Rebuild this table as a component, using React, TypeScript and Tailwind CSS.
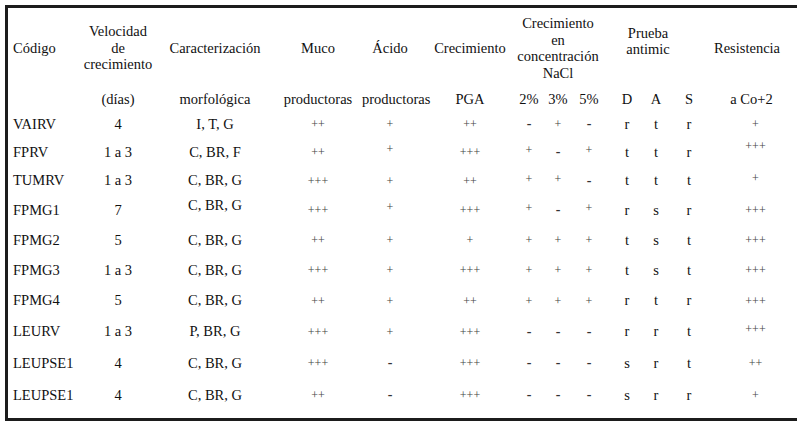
const cols =
  'grid grid-cols-[72px_76px_118px_88px_56px_96px_30px_28px_34px_42px_16px_50px_83px] items-center'

type Row = {
  code: string
  vel: string
  car: string
  muco: string
  acido: string
  pga: string
  nacl: [string, string, string]
  anti: [string, string, string]
  res: string
  h: string
}

const rows: Row[] = [
  { code: 'VAIRV', vel: '4', car: 'I, T, G', muco: '++', acido: '+', pga: '++', nacl: ['-', '+', '-'], anti: ['r', 't', 'r'], res: '+', h: 'h-[28px]' },
  { code: 'FPRV', vel: '1 a 3', car: 'C, BR, F', muco: '++', acido: '+', pga: '+++', nacl: ['+', '-', '+'], anti: ['t', 't', 'r'], res: '+++', h: 'h-[28px]' },
  { code: 'TUMRV', vel: '1 a 3', car: 'C, BR, G', muco: '+++', acido: '+', pga: '++', nacl: ['+', '+', '-'], anti: ['t', 't', 't'], res: '+', h: 'h-[29px]' },
  { code: 'FPMG1', vel: '7', car: 'C, BR, G', muco: '+++', acido: '+', pga: '+++', nacl: ['+', '-', '+'], anti: ['r', 's', 'r'], res: '+++', h: 'h-[30px]' },
  { code: 'FPMG2', vel: '5', car: 'C, BR, G', muco: '++', acido: '+', pga: '+', nacl: ['+', '+', '+'], anti: ['t', 's', 't'], res: '+++', h: 'h-[30px]' },
  { code: 'FPMG3', vel: '1 a 3', car: 'C, BR, G', muco: '+++', acido: '+', pga: '+++', nacl: ['+', '+', '+'], anti: ['t', 's', 't'], res: '+++', h: 'h-[30px]' },
  { code: 'FPMG4', vel: '5', car: 'C, BR, G', muco: '++', acido: '+', pga: '++', nacl: ['+', '+', '+'], anti: ['r', 't', 'r'], res: '+++', h: 'h-[31px]' },
  { code: 'LEURV', vel: '1 a 3', car: 'P, BR, G', muco: '+++', acido: '+', pga: '+++', nacl: ['-', '-', '-'], anti: ['r', 'r', 't'], res: '+++', h: 'h-[31px]' },
  { code: 'LEUPSE1', vel: '4', car: 'C, BR, G', muco: '+++', acido: '-', pga: '+++', nacl: ['-', '-', '-'], anti: ['s', 'r', 't'], res: '++', h: 'h-[32px]' },
  { code: 'LEUPSE1', vel: '4', car: 'C, BR, G', muco: '++', acido: '-', pga: '+++', nacl: ['-', '-', '-'], anti: ['s', 'r', 'r'], res: '+', h: 'h-[32px]' },
]

// plus marks are set smaller and lighter than the body text
function Sign({ v, className = '' }: { v: string; className?: string }) {
  const isPlus = v.includes('+')
  return (
    <div className={`text-center whitespace-nowrap ${className}`}>
      <span className={isPlus ? 'text-[12px] text-[#444]' : 'text-[14px] font-bold text-[#333]'}>
        {v}
      </span>
    </div>
  )
}

export default function App() {
  return (
    <div className="w-[800px] h-[430px] bg-white font-['Liberation_Serif'] text-[14.5px] leading-[16.5px] text-[#111]">
      <div className="ml-[5px] mt-[5px] w-[792px] h-[416px] border-[3px] border-r-0 border-[#1c1c1c]">
        {/* header */}
        <div className={`${cols} h-[80px]`}>
          <div className="pl-[5px]">Código</div>
          <div className="text-center">
            Velocidad
            <br />
            de
            <br />
            crecimiento
          </div>
          <div className="text-center whitespace-nowrap">Caracterización</div>
          <div className="text-center">Muco</div>
          <div className="text-center">Ácido</div>
          <div className="text-center pl-[8px]">Crecimiento</div>
          <div className="col-span-3 text-center pr-[4px] whitespace-nowrap">
            Crecimiento
            <br />
            en
            <br />
            concentración
            <br />
            NaCl
          </div>
          <div className="col-span-3 text-center pr-[24px] pb-[14px]">
            Prueba
            <br />
            antimic
          </div>
          <div className="text-center pr-[18px]">Resistencia</div>
        </div>
        <div className={`${cols} h-[22px]`}>
          <div />
          <div className="text-center">(días)</div>
          <div className="text-center">morfológica</div>
          <div className="text-center whitespace-nowrap">productoras</div>
          <div className="text-center whitespace-nowrap">productoras</div>
          <div className="text-center pl-[8px]">PGA</div>
          <div className="text-center">2%</div>
          <div className="text-center">3%</div>
          <div className="text-center">5%</div>
          <div className="text-center">D</div>
          <div className="text-center">A</div>
          <div className="text-center">S</div>
          <div className="text-center pr-[8px]">a Co+2</div>
        </div>
        {rows.map((r, i) => (
          <div key={i} className={`${cols} ${r.h}`}>
            <div className="pl-[5px]">{r.code}</div>
            <div className="text-center">{r.vel}</div>
            <div className={`text-center ${r.code === 'FPMG1' ? '-translate-y-[5px]' : ''}`}>{r.car}</div>
            <Sign v={r.muco} />
            <Sign v={r.acido} className={r.code === 'FPMG1' || r.code === 'FPRV' ? '-translate-y-[3px]' : ''} />
            <Sign v={r.pga} className="pl-[8px]" />
            {r.nacl.map((n, j) => (
              <Sign key={j} v={n} className={n === '+' && i > 0 && i < 4 ? '-translate-y-[2px]' : ''} />
            ))}
            {r.anti.map((a, j) => (
              <div key={j} className="text-center">
                {a}
              </div>
            ))}
            <Sign
              v={r.res}
              className={r.code === 'FPRV' ? '-translate-y-[6px]' : r.code === 'LEURV' || r.code === 'TUMRV' ? '-translate-y-[3px]' : ''}
            />
          </div>
        ))}
      </div>
    </div>
  )
}
